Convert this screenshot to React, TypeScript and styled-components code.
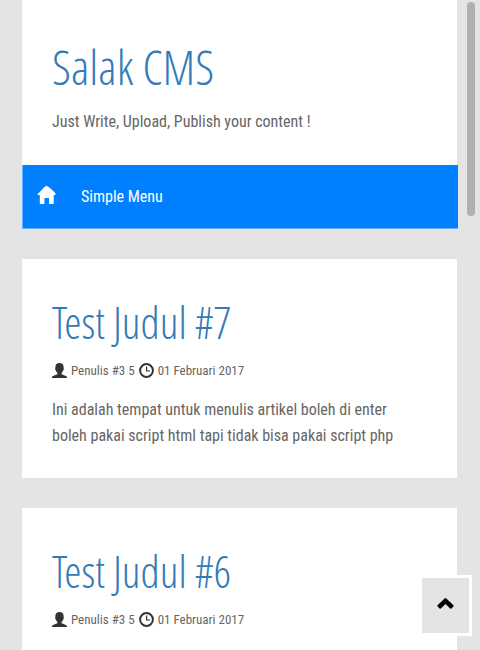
import React from "react";
import styled, { createGlobalStyle } from "styled-components";

const GlobalStyle = createGlobalStyle`
  html { scrollbar-width: none; }
  body {
    margin: 0;
    background: #e4e4e4;
    color: #666;
    font: 16px/26px "Roboto Condensed", "Roboto", sans-serif;
  }
  * { box-sizing: border-box; }
`;

const titleFont = '"Open Sans Condensed Light", "Roboto Condensed", sans-serif';

const Page = styled.div`
  padding: 0 23px 30px 22px;
`;

const Header = styled.header`
  padding: 42px 30px 30px;
  background: #fff;
`;

const SiteTitle = styled.h1`
  margin: 0 0 17px;
  font-family: ${titleFont};
  font-size: 48px;
  line-height: 50px;
  font-weight: 400;
`;

const TitleLink = styled.a`
  color: #337ab7;
  text-decoration: none;
`;

const Tagline = styled.p`
  margin: 0;
`;

const Nav = styled.nav`
  display: flex;
  align-items: center;
  gap: 25px;
  height: 64px;
  margin-right: -1px;
  padding: 0 14px;
  background: #0080ff;
  border: solid #66b3ff;
  border-width: 0 0 1px 1px;
`;

const NavLink = styled.a`
  display: flex;
  color: #fff;
  text-decoration: none;
`;

const HomeLink = styled(NavLink)`
  padding-bottom: 3px;
`;

const Article = styled.article`
  margin-top: 30px;
  padding: 42px 30px 29px;
  background: #fff;
`;

const ArticleTitle = styled.h2`
  margin: 0 0 14px;
  font-family: ${titleFont};
  font-size: 44px;
  line-height: 43px;
  font-weight: 400;
`;

const Meta = styled.div`
  display: flex;
  align-items: center;
  gap: 4px;
  margin-bottom: 14px;
  font-size: 13px;
  line-height: 25px;
  white-space: nowrap;
`;

const Body = styled.p`
  margin: 0;
`;

const Icon = styled.svg`
  flex: none;
  display: block;
  fill: currentColor;
`;

const DarkIcon = styled(Icon)`
  color: #333;
`;

const ToTop = styled.button`
  position: fixed;
  right: 8px;
  bottom: 14px;
  display: grid;
  place-items: center;
  width: 53px;
  height: 61px;
  padding: 0 0 3px;
  border: 3px solid #fff;
  background: #e4e4e4;
  color: #000;
  cursor: pointer;
`;

const ScrollThumb = styled.div`
  position: fixed;
  top: 2px;
  right: 5px;
  width: 8px;
  height: 214px;
  border-radius: 4px;
  background: #b0b0b0;
`;

const posts = [7, 6];

const HomeIcon = () => (
  <Icon width="19" height="18" viewBox="0 0 19 18" aria-hidden="true">
    <path d="M9.5 0Q10.3 0 11 .6L13.5 2.5 16 4.8 18.4 7.3Q19 9 18 9h-1.3v8q0 1-1 1h-3.700v-6H7.400v6H3.800q-1 0-1-1V9H1Q0 9 .5 8.300L8 .6Q8.700 0 9.500 0Z" />
  </Icon>
);

const UserIcon = () => (
  <DarkIcon width="15" height="15" viewBox="0 0 15 15" aria-hidden="true">
    <path d="M7.5 0C10 0 11.6 1.4 11.6 3.8c0 .7-.1 1 .1 1.4.4 1-.1 1.9-.6 2.3-.3 1.2-.8 2-1.500 2.600v1.200c1.500.8 5.400 1.700 5.400 3V15H0v-.7c0-1.300 3.900-2.200 5.400-3v-1.200C4.700 9.500 4.200 8.700 3.900 7.500 3.400 7.100 2.900 6.200 3.300 5.200c.2-.4.1-.7.1-1.400C3.400 1.400 5 0 7.500 0Z" />
  </DarkIcon>
);

const ClockIcon = () => (
  <DarkIcon width="15" height="15" viewBox="0 0 15 15" aria-hidden="true">
    <circle cx="7.5" cy="7.5" r="6.4" fill="none" stroke="currentColor" strokeWidth="2" />
    <path d="M7 3.5h1.200V7.400H11v1.200H7Z" />
  </DarkIcon>
);

export default function App() {
  return (
    <>
      <GlobalStyle />
      <Page>
        <Header>
          <SiteTitle>
            <TitleLink href="#">Salak CMS</TitleLink>
          </SiteTitle>
          <Tagline>Just Write, Upload, Publish your content !</Tagline>
        </Header>
        <Nav>
          <HomeLink href="#" aria-label="Home">
            <HomeIcon />
          </HomeLink>
          <NavLink href="#menu">Simple Menu</NavLink>
        </Nav>
        <main>
          {posts.map((n) => (
            <Article key={n}>
              <ArticleTitle>
                <TitleLink href={`#post-${n}`}>Test Judul #{n}</TitleLink>
              </ArticleTitle>
              <Meta>
                <UserIcon />
                <span>Penulis #3 5</span>
                <ClockIcon />
                <span>01 Februari 2017</span>
              </Meta>
              <Body>
                Ini adalah tempat untuk menulis artikel boleh di enter
                <br />
                boleh pakai script html tapi tidak bisa pakai script php
              </Body>
            </Article>
          ))}
        </main>
      </Page>
      <ToTop type="button" aria-label="Back to top">
        <Icon width="17" height="12" viewBox="0 0 17 12" aria-hidden="true">
          <path d="M7.6.5q.9-.9 1.800 0l7 6.700q.6.6 0 1.200l-2 2q-.6.6-1.200 0L8.500 5.900 3.800 10.400q-.6.6-1.200 0l-2-2Q0 7.800.6 7.200Z" />
        </Icon>
      </ToTop>
      <ScrollThumb />
    </>
  );
}
